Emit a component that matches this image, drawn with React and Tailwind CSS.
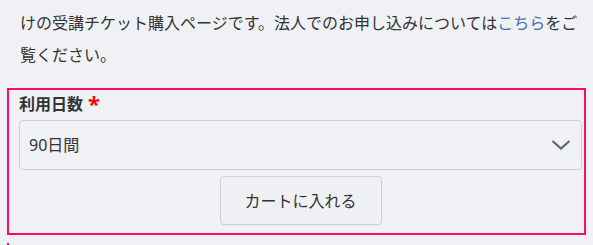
export default function App() {
  return (
    <div className="min-h-[245px] w-[593px] overflow-hidden bg-[#f0f1f5] font-['Noto_Sans','Noto_Sans_CJK_JP',sans-serif] text-[#333]">
      <p className="pl-[20px] pr-[6px] pt-[7px] text-[16px] leading-8">
        けの受講チケット購入ページです。法人でのお申し込みについては
        <a href="#" className="text-[#3b72b8]">こちら</a>
        をご覧ください。
      </p>

      <div className="ml-[7px] mt-[17px] w-[579px] border-2 border-[#fb0a6e] pl-[10px] pr-[2px] pt-[2px] pb-[8px]">
        <label className="flex items-start gap-[5px] text-[16px] font-bold leading-6">
          利用日数
          <span className="text-[22px] leading-[22px] text-[#f50a0a]">*</span>
        </label>

        <div className="mt-[4px] flex h-[50px] items-center justify-between rounded-[4px] border border-[#cdd0d6] pl-[9px] pr-[10px]">
          <span className="text-[16px]">90日間</span>
          <svg width="20" height="12" viewBox="0 0 20 12" fill="none" className="text-[#546a78]">
            <path d="M1.5 2 L10 9.5 L18.5 2" stroke="currentColor" strokeWidth="2.2" />
          </svg>
        </div>

        <div className="mt-[6px] flex justify-center">
          <button className="h-[49px] w-[162px] rounded-[4px] border border-[#cdd0d6] bg-[#eff0f4] text-[16px] shadow-[0_1px_1px_rgba(0,0,0,0.04)]">
            カートに入れる
          </button>
        </div>
      </div>

      <div className="ml-[7px] mt-[8px] h-[4px] w-[2px] bg-[#fb0a6e]" />
    </div>
  );
}
